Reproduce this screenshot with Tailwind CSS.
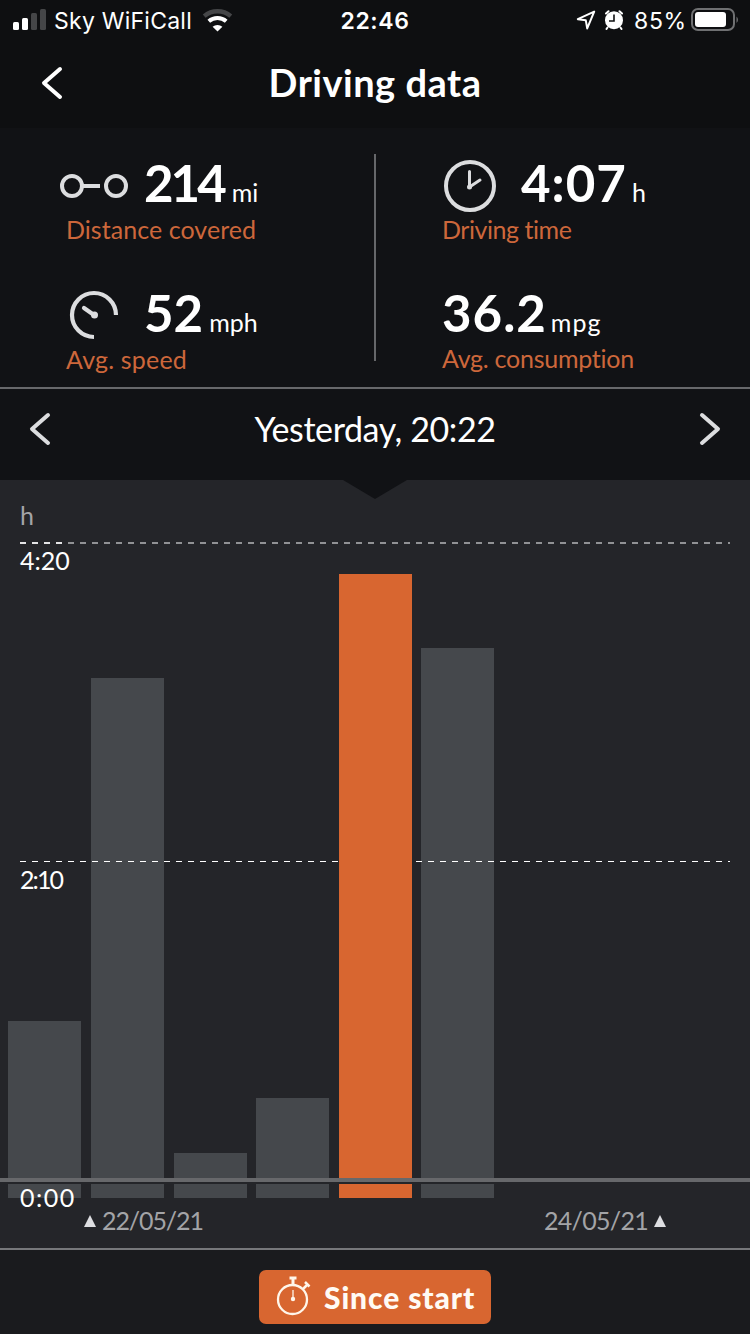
<!DOCTYPE html>
<html lang="en">
<head>
<meta charset="utf-8">
<title>Driving data</title>
<script src="https://cdn.jsdelivr.net/npm/@tailwindcss/browser@4"></script>
</head>
<body class="w-[750px] h-[1334px] overflow-hidden bg-[#111215] text-white font-[Lato,sans-serif] [font-variant-ligatures:none] flex flex-col">
  <header class="h-32 shrink-0 bg-[#0e0f11]">
    <div class="h-10 flex items-center justify-between pl-3 pr-3 font-[Inter,sans-serif] text-[23px] leading-10">
      <div class="flex items-center w-[270px]">
        <svg class="w-9 h-6 shrink-0" viewBox="0 0 36 24"><rect x="1" y="14" width="6" height="8" rx="1.5" fill="#fff"/><rect x="10" y="10" width="6" height="12" rx="1.5" fill="#fff"/><rect x="19" y="5" width="6" height="17" rx="1.5" fill="#454648"/><rect x="28" y="1" width="6" height="21" rx="1.5" fill="#454648"/></svg>
        <span class="ml-[6px] pt-0.5 w-[140px] whitespace-nowrap tracking-[0.25px]">Sky WiFiCall</span>
        <svg class="ml-2 w-8 h-6 shrink-0" viewBox="0 0 32 24" fill="none"><path d="M2.200 8.200a20.500 20.500 0 0 1 26.600 0" stroke="#454648" stroke-width="4.400"/><path d="M6.800 13.200a13.200 13.200 0 0 1 17.400 0" stroke="#fff" stroke-width="4"/><path d="M10.600 18.700a7.600 7.600 0 0 1 9.800 0L15.500 23.400Z" fill="#fff"/></svg>
      </div>
      <span class="pt-0.5 font-semibold tracking-[0.6px]">22:46</span>
      <div class="flex items-center justify-end w-[270px]">
        <svg class="w-5 h-5" viewBox="0 0 20 20" fill="none" stroke="#fff" stroke-width="2" stroke-linejoin="round"><path d="M18.200 1.600L1.800 9.200L9.800 10.300L11.200 18.400Z"/></svg>
        <svg class="ml-2 w-5 h-5" viewBox="0 0 20 20"><circle cx="10" cy="10.200" r="9" fill="#fff"/><path d="M2 3.500L4.500 1.200M18 3.500L15.500 1.200M3.500 17.500L2.500 19M16.500 17.500L17.500 19" stroke="#fff" stroke-width="2" stroke-linecap="round"/><path d="M10 4.500V11H5" stroke="#0e0f11" stroke-width="1.600" fill="none"/></svg>
        <span class="ml-[10px] pt-0.5 w-[52px] whitespace-nowrap tracking-[0.7px]">85%</span>
        <svg class="ml-[5px] -mr-px w-12 h-6" viewBox="0 0 48 24"><rect x="1" y="1" width="42" height="21" rx="6" fill="none" stroke="#6f7072" stroke-width="2"/><rect x="4" y="4" width="31" height="15" rx="3" fill="#fff"/><path d="M45.500 8.500q3 3 0 6.500z" fill="#6f7072"/></svg>
      </div>
    </div>
    <div class="h-[88px] grid grid-cols-[100px_1fr_100px] items-start">
      <svg class="ml-10 mt-[25px] w-6 h-9" viewBox="0 0 24 36" fill="none" stroke="#fff" stroke-width="4" stroke-linecap="round" stroke-linejoin="round"><path d="M20 4L4 18L20 32"/></svg>
      <h1 class="pt-[18px] text-center font-bold text-[38px] leading-[48px] tracking-[0.5px]">Driving data</h1>
    </div>
  </header>

  <section class="h-[261px] shrink-0 border-b-2 border-[#67686b] grid grid-cols-[374px_2px_1fr]">
    <div class="pt-[23px]">
      <div class="h-16 flex items-start">
        <svg class="ml-[60px] mt-[19px] w-[84px] h-8 shrink-0" viewBox="0 0 84 32" fill="none" stroke="#dcdddf" stroke-width="4"><circle cx="12" cy="16" r="10"/><circle cx="56" cy="16" r="10"/><path d="M23 16H40"/></svg>
        <div class="leading-[64px] whitespace-nowrap"><span class="font-bold text-[51px] tracking-[-3px]">214</span><span class="ml-2 text-[25px] leading-none">mi</span></div>
      </div>
      <div class="-mt-px pl-[66px] text-[25px] leading-[30px] tracking-[0.05px] text-[#cd673b]">Distance covered</div>
      <div class="mt-[37px] h-16 flex items-start">
        <svg class="ml-[69px] mt-[9px] w-[75px] h-[50px] shrink-0" viewBox="0 0 75 50" fill="none" stroke="#dcdddf" stroke-width="4.200"><path d="M25 47A22 22 0 1 1 47 25"/><path d="M15 18L25 25" stroke-linecap="round"/><circle cx="25.500" cy="25" r="3.500" fill="#dcdddf" stroke="none"/></svg>
        <div class="leading-[64px] whitespace-nowrap"><span class="font-bold text-[51px]">52</span><span class="ml-[6px] text-[25px] leading-none">mph</span></div>
      </div>
      <div class="-mt-px pl-[66px] text-[25px] leading-[30px] tracking-[0.2px] text-[#cd673b]">Avg. speed</div>
    </div>
    <div class="mt-[26px] h-[207px] bg-[#66676a]"></div>
    <div class="pt-[23px]">
      <div class="h-16 flex items-start">
        <svg class="ml-[67px] mt-[8px] w-[78px] h-[54px] shrink-0" viewBox="0 0 78 54" fill="none" stroke="#dcdddf" stroke-width="4"><circle cx="27" cy="27" r="24"/><path d="M26.500 28V12.500M26.500 28L37 21" stroke-width="3" stroke-linecap="round"/><circle cx="26.500" cy="28" r="2.500" fill="#dcdddf" stroke="none"/></svg>
        <div class="leading-[64px] whitespace-nowrap"><span class="font-bold text-[51px] tracking-[1px]">4:07</span><span class="ml-[5px] text-[25px] leading-none">h</span></div>
      </div>
      <div class="-mt-px pl-[66px] text-[25px] leading-[30px] tracking-[-0.45px] text-[#cd673b]">Driving time</div>
      <div class="mt-[37px] h-16 pl-[66px] leading-[64px] whitespace-nowrap"><span class="font-bold text-[51px] tracking-[1px]">36.2</span><span class="ml-1 text-[25px] leading-none tracking-[1px]">mpg</span></div>
      <div class="-mt-0.5 pl-[66px] text-[25px] leading-[30px] tracking-[-0.25px] text-[#cd673b]">Avg. consumption</div>
    </div>
  </section>

  <nav class="h-[91px] shrink-0 flex items-start justify-between px-7">
    <svg class="mt-[22px] w-6 h-9" viewBox="0 0 24 36" fill="none" stroke="#dcdddf" stroke-width="4" stroke-linecap="round" stroke-linejoin="round"><path d="M20 4L4 18L20 32"/></svg>
    <span class="mt-4 text-[34px] leading-[48px] tracking-[-0.4px]">Yesterday, 20:22</span>
    <svg class="mt-[22px] w-6 h-9" viewBox="0 0 24 36" fill="none" stroke="#dcdddf" stroke-width="4" stroke-linecap="round" stroke-linejoin="round"><path d="M4 4L20 18L4 32"/></svg>
  </nav>

  <main class="relative h-[768px] shrink-0 bg-[#242529]">
    <svg class="absolute left-[343px] top-0 w-16 h-[19px]" viewBox="0 0 64 19"><path d="M0 0H64L32 19Z" fill="#111215"/></svg>
    <div class="h-[718px] pl-2 flex items-end gap-[9.650px]">
      <div class="w-[73px] h-[177px] bg-[#45484c]"></div>
      <div class="w-[73px] h-[520px] bg-[#45484c]"></div>
      <div class="ml-[0.300px] w-[73px] h-[45px] bg-[#45484c]"></div>
      <div class="-ml-[0.300px] w-[73px] h-[100px] bg-[#45484c]"></div>
      <div class="relative z-10 w-[73px] h-[624px] bg-[#d86630]"></div>
      <div class="w-[73px] h-[550px] bg-[#45484c]"></div>
    </div>
    <svg class="absolute left-0 top-0 w-[750px] h-[400px]" viewBox="0 0 750 400" fill="none"><path d="M20 63H730" stroke="#919295" stroke-width="2" stroke-dasharray="6 6"/><path d="M20 63H62" stroke="#e4e4e6" stroke-width="2" stroke-dasharray="6 6"/><path d="M20 381.500H730" stroke="#fff" stroke-width="1" stroke-dasharray="6 6"/></svg>
    <div class="absolute inset-x-0 top-[698px] z-20 h-1.5 bg-[#67686b] border-b-2 border-[#242529]"></div>
    <span class="absolute left-5 top-[20px] text-[25px] leading-[30px] text-[#a3a4a7]">h</span>
    <span class="absolute left-5 top-[65px] text-[25px] leading-[30px]">4:20</span>
    <span class="absolute left-5 top-[384px] text-[25px] leading-[30px] tracking-[-1.900px]">2:10</span>
    <span class="absolute left-5 top-[702px] text-[25px] leading-[30px] tracking-[1.500px]">0:00</span>
    <div class="flex justify-between pl-[84px] pr-[84px] pt-[7px] text-[25px] leading-[30px] text-[#a3a4a7]">
      <div class="flex items-center gap-[6px]"><svg class="mt-0.5 w-3 h-3" viewBox="0 0 12 12"><path d="M6 0L12 12H0Z" fill="#dddee1"/></svg><span class="tracking-[-1.100px]">22/05/21</span></div>
      <div class="flex items-center gap-[6px]"><span class="tracking-[-0.700px]">24/05/21</span><svg class="mt-0.5 w-3 h-3" viewBox="0 0 12 12"><path d="M6 0L12 12H0Z" fill="#dddee1"/></svg></div>
    </div>
  </main>

  <footer class="flex-1 border-t-2 border-[#77787b] bg-[#1a1b1e] flex justify-center items-start pt-5">
    <button class="w-[232px] h-[54px] rounded-[7px] bg-[#d86630] flex items-center pl-4">
      <svg class="w-[40px] h-[42px] shrink-0" viewBox="0 0 40 42" fill="none" stroke="#fff6ea" stroke-width="2.300"><circle cx="17.500" cy="23.500" r="14.500"/><path d="M18 3V9M14.500 2H21.500" stroke-width="3"/><path d="M28 13L32.500 8.500M30 6L34.500 10.500" stroke-width="2.500"/><path d="M18 14V23" stroke-width="1.300"/><circle cx="18" cy="23" r="2.200" fill="#fff6ea" stroke="none"/></svg>
      <span class="ml-[9px] font-black text-[30px] leading-[54px] tracking-[0.900px] text-[#fffaf4] whitespace-nowrap">Since start</span>
    </button>
  </footer>
</body>
</html>
